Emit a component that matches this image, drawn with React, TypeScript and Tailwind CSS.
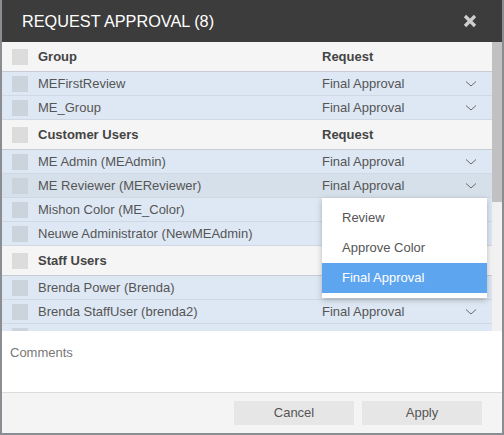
import React from "react";

const Chevron = () => (
  <svg width="12" height="8" viewBox="0 0 12 8" className="text-[#6a6a6a]">
    <path d="M1 1.5 L6 6 L11 1.5" fill="none" stroke="currentColor" strokeWidth="1" />
  </svg>
);

type Row = { name: string; req?: string; hover?: boolean };

const SectionHeader = ({ title, req = true }: { title: string; req?: boolean }) => (
  <div className="flex items-center h-[30px] shrink-0 bg-[#f5f5f5] border-b border-[#c8ccd2]">
    <div className="w-4 h-4 bg-[#dcdcdc] ml-[10px] mr-[10px]" />
    <div className="flex-1 text-[13px] text-[#444] font-bold">{title}</div>
    {req && <div className="w-[170px] text-[13px] font-bold text-[#444]">Request</div>}
  </div>
);

const DataRow = ({ r }: { r: Row }) => (
  <div
    className={`flex items-center h-6 shrink-0 border-b border-[#cfd9e5] ${r.hover ? "bg-[#d6e0eb]" : "bg-[#dee8f4]"}`}
  >
    <div className="w-4 h-4 bg-[#cbd3dd] ml-[10px] mr-[10px]" />
    <div className="flex-1 text-[13px] text-[#555]">{r.name}</div>
    {r.req !== undefined && (
      <div className="w-[170px] flex items-center text-[13px] text-[#555]">
        <span className="flex-1">{r.req}</span>
        <span className="mr-[15px] flex items-center">{r.req ? <Chevron /> : null}</span>
      </div>
    )}
  </div>
);

export default function App() {
  return (
    <div
      className="w-[504px] h-[435px] bg-[#8a8d91] pl-[2px] pr-[2px] pb-[2px] overflow-hidden"
      style={{ fontFamily: "'Liberation Sans', Arial, sans-serif" }}
    >
      <div className="w-[500px] h-[433px] flex flex-col bg-white relative">
        <div className="h-[42px] bg-[#3c3c3c] flex items-center justify-between pl-5 pr-[25px] shrink-0">
          <div className="text-white text-[16.25px]">REQUEST APPROVAL (8)</div>
          <svg width="14" height="14" viewBox="0 0 14 14">
            <path d="M2 2 L12 12 M12 2 L2 12" stroke="#cfcfcf" strokeWidth="3.2" />
          </svg>
        </div>
        <div className="h-[289px] flex shrink-0 overflow-hidden">
          <div className="flex-1 flex flex-col overflow-hidden">
            <SectionHeader title="Group" />
            <DataRow r={{ name: "MEFirstReview", req: "Final Approval" }} />
            <DataRow r={{ name: "ME_Group", req: "Final Approval" }} />
            <SectionHeader title="Customer Users" />
            <DataRow r={{ name: "ME Admin (MEAdmin)", req: "Final Approval" }} />
            <DataRow r={{ name: "ME Reviewer (MEReviewer)", req: "Final Approval", hover: true }} />
            <DataRow r={{ name: "Mishon Color (ME_Color)", req: "" }} />
            <DataRow r={{ name: "Neuwe Administrator (NewMEAdmin)", req: "" }} />
            <SectionHeader title="Staff Users" req={false} />
            <DataRow r={{ name: "Brenda Power (Brenda)", req: "" }} />
            <DataRow r={{ name: "Brenda StaffUser (brenda2)", req: "Final Approval" }} />
            <DataRow r={{ name: "Brenda SU (bb)", req: "Final Approval" }} />
          </div>
          <div className="w-[10px] bg-[#f1f1f1] flex flex-col">
            <div className="h-[160px] bg-[#c1c1c1]" />
          </div>
        </div>
        <div className="flex-1 border-b border-[#dcdcdc] px-2 pt-[12px]">
          <div className="text-[13px] text-[#777]">Comments</div>
        </div>
        <div className="h-[40px] bg-[#f4f4f4] flex items-center justify-end gap-2 pr-5 shrink-0">
          <button className="w-[120px] h-6 bg-[#e6e6e6] text-[13px] text-[#555]">Cancel</button>
          <button className="w-[120px] h-6 bg-[#e6e6e6] text-[13px] text-[#555]">Apply</button>
        </div>

        <div className="absolute left-[320px] top-[198px] w-[165px] bg-white shadow-[0_2px_6px_rgba(0,0,0,0.25)] py-[5px]">
          <div className="h-[30px] flex items-center pl-5 text-[13px] text-[#555]">Review</div>
          <div className="h-[30px] flex items-center pl-5 text-[13px] text-[#555]">Approve Color</div>
          <div className="h-[30px] flex items-center pl-5 text-[13px] text-white bg-[#5ea5ef]">Final Approval</div>
        </div>
      </div>
    </div>
  );
}
